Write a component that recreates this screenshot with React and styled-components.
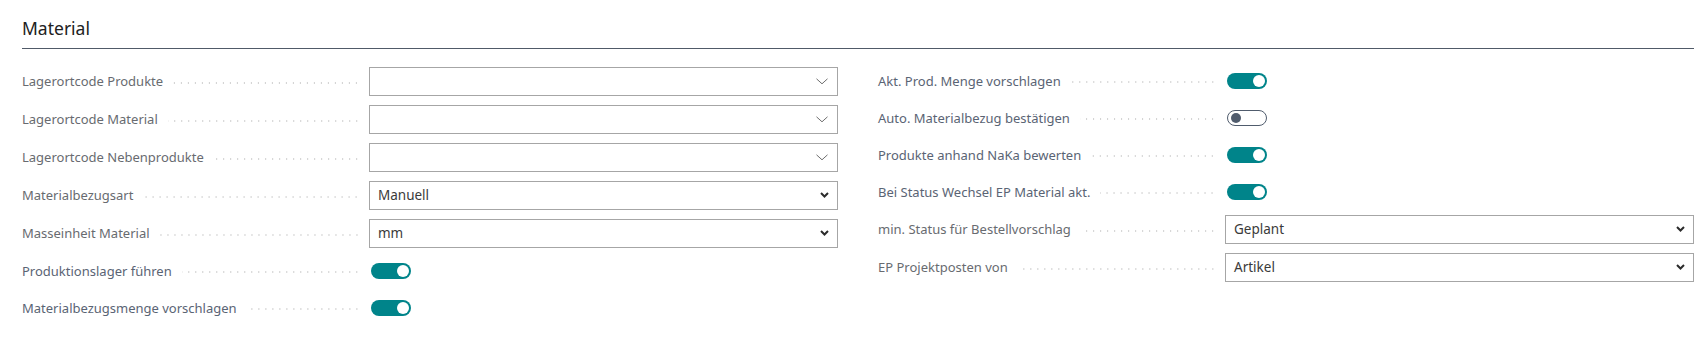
import React from 'react';
import styled, { createGlobalStyle } from 'styled-components';

const GlobalStyle = createGlobalStyle`
  html, body {
    margin: 0;
    padding: 0;
    background: #ffffff;
  }
  body {
    font-family: 'Noto Sans', 'Open Sans', sans-serif;
    -webkit-font-smoothing: antialiased;
  }
`;

const Page = styled.div`
  width: 1708px;
  box-sizing: border-box;
  padding: 16px 14px 20px 22px;
`;

const SectionTitle = styled.h2`
  margin: 0;
  font-size: 17.5px;
  font-weight: 400;
  line-height: 24px;
  color: #212121;
  padding-bottom: 8px;
  border-bottom: 1px solid #505a68;
`;

const Columns = styled.div`
  display: grid;
  grid-template-columns: 1fr 1fr;
  column-gap: 40px;
  padding-top: 13px;
`;

const Column = styled.div`
  display: flex;
  flex-direction: column;
`;

const Row = styled.div`
  display: flex;
  align-items: center;
  height: ${(p) => (p.$toggle ? '37px' : '38px')};
`;

const LabelCell = styled.div`
  width: 347px;
  flex-shrink: 0;
  display: flex;
  align-items: center;
  padding-right: 9px;
  box-sizing: border-box;
`;

const LabelText = styled.span`
  font-size: 13px;
  color: ${(p) => (p.$strong ? '#5a6474' : '#686b70')};
  white-space: nowrap;
  padding-right: ${(p) => (p.$wide ? '15px' : '10px')};
`;

const Leader = styled.span`
  flex: 1;
  height: 2px;
  margin-top: 3px;
  background-image: radial-gradient(circle, #cfcfcf 0.8px, transparent 1.1px);
  background-size: 7px 2px;
  background-repeat: repeat-x;
  background-position: right center;
`;

const Field = styled.div`
  flex: 1;
  height: 29px;
  box-sizing: border-box;
  border: 1px solid #a6a6a6;
  background: #ffffff;
  display: flex;
  align-items: center;
  justify-content: space-between;
  padding: 0 ${(p) => (p.$lookup ? '9px' : '8px')} 0 8px;
`;

const FieldValue = styled.span`
  font-size: 13.5px;
  color: #3a3a3a;
`;

const Switch = styled.div`
  width: 40px;
  height: 16px;
  margin-left: 2px;
  box-sizing: border-box;
  border-radius: 8px;
  display: flex;
  align-items: center;
  justify-content: ${(p) => (p.$on ? 'flex-end' : 'flex-start')};
  padding: 0 ${(p) => (p.$on ? '2px' : '3px')};
  background: ${(p) => (p.$on ? '#00848a' : '#ffffff')};
  border: ${(p) => (p.$on ? 'none' : '1px solid #505c6d')};
`;

const Knob = styled.span`
  width: ${(p) => (p.$on ? '12px' : '10px')};
  height: ${(p) => (p.$on ? '12px' : '10px')};
  border-radius: 50%;
  background: ${(p) => (p.$on ? '#ffffff' : '#505c6d')};
`;

const ThinChevron = () => (
  <svg width="12" height="7" viewBox="0 0 12 7">
    <path d="M0.5 0.8 L6 5.8 L11.5 0.8" fill="none" stroke="#6e6e6e" strokeWidth="1" />
  </svg>
);

const BoldChevron = () => (
  <svg width="9" height="6" viewBox="0 0 9 6">
    <path d="M1 1 L4.5 4.5 L8 1" fill="none" stroke="#2b2b2b" strokeWidth="2" />
  </svg>
);

const FormRow = ({ field }) => {
  const isToggle = field.type === 'toggle';
  return (
    <Row $toggle={isToggle}>
      <LabelCell>
        <LabelText $strong={isToggle} $wide={field.wide}>
          {field.label}
        </LabelText>
        <Leader />
      </LabelCell>
      {isToggle ? (
        <Switch $on={field.value}>
          <Knob $on={field.value} />
        </Switch>
      ) : (
        <Field $lookup={field.type === 'lookup'}>
          <FieldValue>{field.value}</FieldValue>
          {field.type === 'lookup' ? <ThinChevron /> : <BoldChevron />}
        </Field>
      )}
    </Row>
  );
};

const leftFields = [
  { label: 'Lagerortcode Produkte', type: 'lookup', value: '' },
  { label: 'Lagerortcode Material', type: 'lookup', value: '' },
  { label: 'Lagerortcode Nebenprodukte', type: 'lookup', value: '' },
  { label: 'Materialbezugsart', type: 'select', value: 'Manuell' },
  { label: 'Masseinheit Material', type: 'select', value: 'mm' },
  { label: 'Produktionslager führen', type: 'toggle', value: true },
  { label: 'Materialbezugsmenge vorschlagen', type: 'toggle', value: true },
];

const rightFields = [
  { label: 'Akt. Prod. Menge vorschlagen', type: 'toggle', value: true },
  { label: 'Auto. Materialbezug bestätigen', type: 'toggle', value: false },
  { label: 'Produkte anhand NaKa bewerten', type: 'toggle', value: true },
  { label: 'Bei Status Wechsel EP Material akt.', type: 'toggle', value: true },
  { label: 'min. Status für Bestellvorschlag', type: 'select', value: 'Geplant' },
  { label: 'EP Projektposten von', type: 'select', value: 'Artikel', wide: true },
];

export default function App() {
  return (
    <>
      <GlobalStyle />
      <Page>
        <SectionTitle>Material</SectionTitle>
        <Columns>
          <Column>
            {leftFields.map((f) => (
              <FormRow key={f.label} field={f} />
            ))}
          </Column>
          <Column>
            {rightFields.map((f) => (
              <FormRow key={f.label} field={f} />
            ))}
          </Column>
        </Columns>
      </Page>
    </>
  );
}
